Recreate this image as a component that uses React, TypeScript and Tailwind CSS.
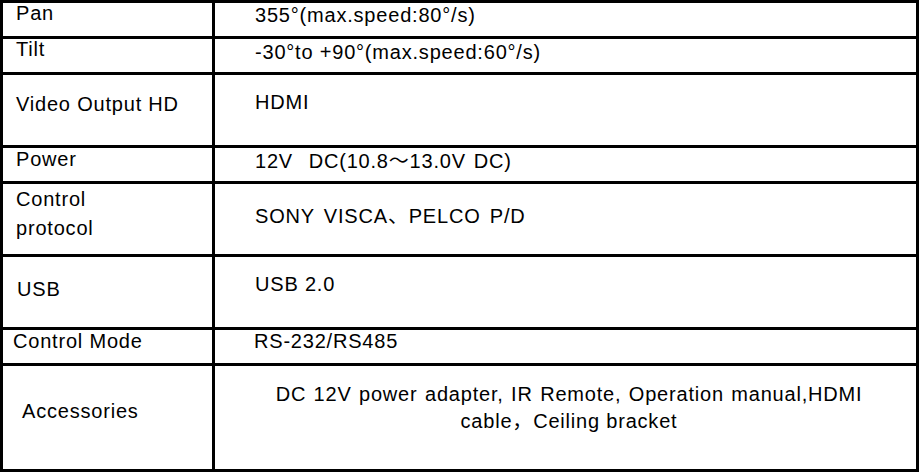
type Row = {
  label: React.ReactNode;
  value: React.ReactNode;
  height: string;
  labelClass: string;
  valueClass: string;
};

const rows: Row[] = [
  { label: 'Pan', value: '355°(max.speed:80°/s)', height: 'h-[36px]', labelClass: 'pl-[13px] pt-0', valueClass: 'pl-10 pt-[2px]' },
  { label: 'Tilt', value: '-30°to +90°(max.speed:60°/s)', height: 'h-[36px]', labelClass: 'pl-[13px] pt-0', valueClass: 'pl-10 pt-[3px]' },
  { label: 'Video Output HD', value: 'HDMI', height: 'h-[73px]', labelClass: 'pl-[13px] pt-[19px]', valueClass: 'pl-10 pt-[17px]' },
  { label: 'Power', value: '12V  DC(10.8～13.0V DC)', height: 'h-[36px]', labelClass: 'pl-[13px] pt-[1px]', valueClass: 'pl-10 pt-[3px] [word-spacing:1.5px]' },
  {
    label: (
      <span className="block leading-[29px]">
        Control
        <br />
        protocol
      </span>
    ),
    value: 'SONY VISCA、PELCO P/D',
    height: 'h-[73px]',
    labelClass: 'pl-[13px] pt-[1px]',
    valueClass: 'pl-10 pt-[22px] [word-spacing:3px]',
  },
  { label: 'USB', value: 'USB 2.0', height: 'h-[73px]', labelClass: 'pl-[14px] pt-[22px]', valueClass: 'pl-10 pt-[17px]' },
  { label: 'Control Mode', value: 'RS-232/RS485', height: 'h-[36px]', labelClass: 'pl-[10px] pt-[1px]', valueClass: 'pl-[39px] pt-[1px]' },
  {
    label: 'Accessories',
    value: (
      <span className="block text-center leading-[27px]">
        <span className="[word-spacing:1.1px]">DC 12V power adapter, IR Remote, Operation manual,HDMI</span>
        <br />
        cable，Ceiling bracket
      </span>
    ),
    height: 'h-[106px]',
    labelClass: 'pl-[19px] pt-[35px]',
    valueClass: 'pl-[7px] pt-[15px]',
  },
];

export default function App() {
  return (
    <div className="w-[921px] h-[472px] bg-white overflow-hidden">
      <div
        className="w-[919px] border-x-[3px] border-t-[3px] border-black text-black text-[20px] leading-[20px] tracking-[0.8px]"
        style={{ fontFamily: '"Liberation Sans", Arial, "Noto Sans CJK SC", sans-serif' }}
      >
        {rows.map((row, i) => (
          <div key={i} className={`flex border-b-[3px] border-black ${row.height}`}>
            <div className={`w-[212px] shrink-0 border-r-[3px] border-black ${row.labelClass}`}>{row.label}</div>
            <div className={`flex-1 whitespace-pre ${row.valueClass}`}>{row.value}</div>
          </div>
        ))}
      </div>
    </div>
  );
}
